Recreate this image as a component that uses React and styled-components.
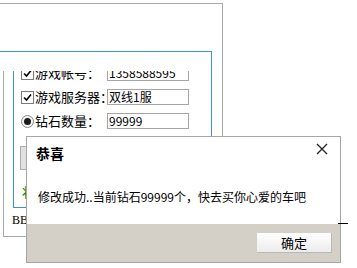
import styled, { createGlobalStyle } from 'styled-components';

const GlobalStyle = createGlobalStyle`
  html, body {
    margin: 0;
    padding: 0;
    background: #ffffff;
  }
  body {
    font-family: "Noto Sans CJK SC", "DejaVu Sans", sans-serif;
    overflow: hidden;
  }
`

const Desktop = styled.div`
  position: relative;
  width: 357px;
  height: 268px;
  overflow: hidden;
  background: #ffffff;
`

const BackWindow = styled.div`
  margin-top: 3px;
  width: 222px;
  height: 233px;
  border-top: 1px solid #a9a9a9;
  border-right: 1px solid #a9a9a9;
  display: flex;
  flex-direction: column;
  position: relative;

  &::after {
    content: "";
    position: absolute;
    left: 3px;
    right: -1px;
    top: 67px;
    bottom: 0;
    border-left: 1px solid #a9a9a9;
    border-bottom: 1px solid #a9a9a9;
    pointer-events: none;
  }
`

const WindowHead = styled.div`
  height: 47px;
  flex: none;
`

const BluePane = styled.div`
  width: 211px;
  height: 156px;
  flex: none;
  border-top: 1px solid #3a8ee6;
  border-right: 1px solid #3a8ee6;
  display: flex;
  flex-direction: column;
`

const PaneHead = styled.div`
  height: 19px;
  flex: none;
`

const FormArea = styled.div`
  flex: 1;
  margin-left: 13px;
  border-left: 1px solid #3a8ee6;
  border-bottom: 1px solid #3a8ee6;
  overflow: hidden;
  padding-left: 7px;
`

const Rows = styled.div`
  margin-top: -10px;
  display: flex;
  flex-direction: column;
`

const Row = styled.div`
  height: 24px;
  display: flex;
  align-items: center;
`

const Check = styled.span`
  width: 11px;
  height: 11px;
  border: 1px solid #7a7a7a;
  background: #ffffff;
  display: flex;
  align-items: center;
  justify-content: center;
  flex: none;
`

const Radio = styled.span`
  width: 11px;
  height: 11px;
  border: 1px solid #8a8a8a;
  border-radius: 50%;
  background: #f4f4f4;
  display: flex;
  align-items: center;
  justify-content: center;
  flex: none;

  &::after {
    content: "";
    width: 7px;
    height: 7px;
    border-radius: 50%;
    background: #1a1a1a;
  }
`

const Label = styled.span`
  width: 72px;
  margin-left: 1px;
  font-size: 13px;
  color: #000000;
  white-space: nowrap;
  line-height: 16px;
`

const Field = styled.div`
  width: 79px;
  height: 14px;
  border: 1px solid #a5a5a5;
  font-size: 12px;
  line-height: 14px;
  padding-left: 1px;
  color: #000000;
  white-space: nowrap;
  overflow: hidden;
`

const GrayButton = styled.div`
  margin-top: 13px;
  margin-left: -1px;
  width: 60px;
  height: 22px;
  background: #e1e1e1;
  border: 1px solid #adadad;
`

const StatusText = styled.div`
  margin-top: 14px;
  margin-left: 1px;
  font-size: 13px;
  color: #008000;
  line-height: 16px;
`

const Footnote = styled.div`
  margin-left: 12px;
  margin-top: 5px;
  font-family: "Liberation Serif", "Noto Sans CJK SC", serif;
  font-size: 12px;
  line-height: 14px;
  color: #000000;
`

const Dialog = styled.div`
  position: absolute;
  left: 26px;
  top: 136px;
  width: 313px;
  height: 125px;
  border: 1px solid #a6a6a6;
  background: #ffffff;
  display: flex;
  flex-direction: column;
`

const DialogTitleBar = styled.div`
  height: 32px;
  display: flex;
  align-items: center;
  justify-content: space-between;
  padding: 0 12px 0 9px;
`

const DialogTitle = styled.span`
  font-size: 14px;
  font-weight: bold;
  color: #000000;
`

const CloseIcon = styled.svg`
  width: 12px;
  height: 12px;
  margin-top: -8px;
`

const DialogBody = styled.div`
  flex: 1;
  padding-left: 11px;
  padding-top: 19px;
  font-size: 12px;
  color: #000000;
  white-space: nowrap;
`

const DialogFooter = styled.div`
  height: 38px;
  flex: none;
  background: #d4d0c8;
  display: flex;
  justify-content: flex-end;
  align-items: flex-start;
  padding: 9px 8px 0 0;
  box-sizing: border-box;
  position: relative;
`

const OkButton = styled.div`
  width: 74px;
  height: 19px;
  background: linear-gradient(#ffffff, #ececec);
  border-right: 1px solid #b8b8b8;
  border-bottom: 1px solid #b8b8b8;
  font-size: 13px;
  line-height: 19px;
  text-align: center;
  color: #000000;
`

const CursorDash = styled.span`
  position: absolute;
  right: -8px;
  top: -1px;
  width: 10px;
  height: 1px;
  background: #000000;
`

const App = () => {
  return (
    <>
      <GlobalStyle />
      <Desktop>
        <BackWindow>
          <WindowHead />
          <BluePane>
            <PaneHead />
            <FormArea>
              <Rows>
                <Row>
                  <Check>
                    <svg width="9" height="9" viewBox="0 0 9 9">
                      <path d="M1 4.5 L3.5 7 L8 1.5" fill="none" stroke="#000" strokeWidth="1.6" />
                    </svg>
                  </Check>
                  <Label>游戏帐号：</Label>
                  <Field>1358588595</Field>
                </Row>
                <Row>
                  <Check>
                    <svg width="9" height="9" viewBox="0 0 9 9">
                      <path d="M1 4.5 L3.5 7 L8 1.5" fill="none" stroke="#000" strokeWidth="1.6" />
                    </svg>
                  </Check>
                  <Label>游戏服务器：</Label>
                  <Field>双线1服</Field>
                </Row>
                <Row>
                  <Radio />
                  <Label>钻石数量：</Label>
                  <Field>99999</Field>
                </Row>
              </Rows>
              <GrayButton />
              <StatusText>状</StatusText>
            </FormArea>
          </BluePane>
          <Footnote>BB华</Footnote>
        </BackWindow>

        <Dialog>
          <DialogTitleBar>
            <DialogTitle>恭喜</DialogTitle>
            <CloseIcon viewBox="0 0 12 12">
              <path d="M1 1 L11 11 M11 1 L1 11" stroke="#222" strokeWidth="1.3" />
            </CloseIcon>
          </DialogTitleBar>
          <DialogBody>修改成功..当前钻石99999个，快去买你心爱的车吧</DialogBody>
          <DialogFooter>
            <OkButton>确定</OkButton>
            <CursorDash />
          </DialogFooter>
        </Dialog>
      </Desktop>
    </>
  );
}

export default App;
